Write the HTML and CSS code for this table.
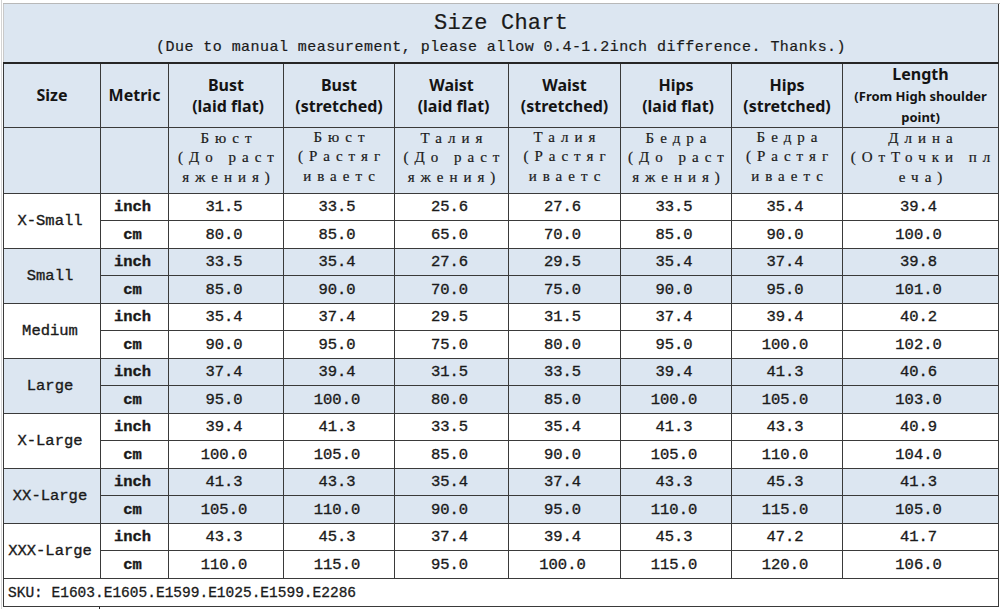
FILE: index.html
```html
<!DOCTYPE html>
<html lang="en">
<head>
<meta charset="utf-8">
<title>Size Chart</title>
<link rel="stylesheet" href="styles.css">
</head>
<body>
<div class="sheet">
  <div class="topstrip"></div>
  <table class="chart">
    <colgroup>
      <col class="c-size"><col class="c-metric"><col class="c-a"><col class="c-b"><col class="c-c"><col class="c-d"><col class="c-e"><col class="c-f"><col class="c-len">
    </colgroup>
    <tr class="title-row">
      <td colspan="9">
        <div class="title">Size Chart</div>
        <div class="subtitle">(Due to manual measurement, please allow 0.4-1.2inch difference.&nbsp;Thanks.)</div>
      </td>
    </tr>
    <tr class="head-row">
      <th>Size</th>
      <th>Metric</th>
      <th>Bust<br>&nbsp;(laid flat)</th>
      <th>Bust<br>(stretched)</th>
      <th>Waist<br>&nbsp;(laid flat)</th>
      <th>Waist<br>(stretched)</th>
      <th>Hips<br>&nbsp;(laid flat)</th>
      <th>Hips<br>(stretched)</th>
      <th><span class="len">Length</span><br><span class="len-sub">(From High shoulder<br>point)</span></th>
    </tr>
    <tr class="ru-row">
      <td></td>
      <td></td>
      <td><div class="ru"><div class="ru-in">Бюст<br>(До раст<br>яжения)</div></div></td>
      <td><div class="ru four"><div class="ru-in">Бюст<br>(Растяг<br>иваетс</div></div></td>
      <td><div class="ru"><div class="ru-in">Талия<br>(До раст<br>яжения)</div></div></td>
      <td><div class="ru four"><div class="ru-in">Талия<br>(Растяг<br>иваетс</div></div></td>
      <td><div class="ru"><div class="ru-in">Бедра<br>(До раст<br>яжения)</div></div></td>
      <td><div class="ru four"><div class="ru-in">Бедра<br>(Растяг<br>иваетс</div></div></td>
      <td><div class="ru"><div class="ru-in">Длина<br>(ОтТочки пл<br>еча)</div></div></td>
    </tr>

    <tr class="r-a"><td rowspan="2" class="size">X-Small</td><td class="metric">inch</td><td>31.5</td><td>33.5</td><td>25.6</td><td>27.6</td><td>33.5</td><td>35.4</td><td>39.4</td></tr>
    <tr class="r-b"><td class="metric">cm</td><td>80.0</td><td>85.0</td><td>65.0</td><td>70.0</td><td>85.0</td><td>90.0</td><td>100.0</td></tr>

    <tr class="r-a alt"><td rowspan="2" class="size">Small</td><td class="metric">inch</td><td>33.5</td><td>35.4</td><td>27.6</td><td>29.5</td><td>35.4</td><td>37.4</td><td>39.8</td></tr>
    <tr class="r-b alt"><td class="metric">cm</td><td>85.0</td><td>90.0</td><td>70.0</td><td>75.0</td><td>90.0</td><td>95.0</td><td>101.0</td></tr>

    <tr class="r-a"><td rowspan="2" class="size">Medium</td><td class="metric">inch</td><td>35.4</td><td>37.4</td><td>29.5</td><td>31.5</td><td>37.4</td><td>39.4</td><td>40.2</td></tr>
    <tr class="r-b"><td class="metric">cm</td><td>90.0</td><td>95.0</td><td>75.0</td><td>80.0</td><td>95.0</td><td>100.0</td><td>102.0</td></tr>

    <tr class="r-a alt"><td rowspan="2" class="size">Large</td><td class="metric">inch</td><td>37.4</td><td>39.4</td><td>31.5</td><td>33.5</td><td>39.4</td><td>41.3</td><td>40.6</td></tr>
    <tr class="r-b alt"><td class="metric">cm</td><td>95.0</td><td>100.0</td><td>80.0</td><td>85.0</td><td>100.0</td><td>105.0</td><td>103.0</td></tr>

    <tr class="r-a"><td rowspan="2" class="size">X-Large</td><td class="metric">inch</td><td>39.4</td><td>41.3</td><td>33.5</td><td>35.4</td><td>41.3</td><td>43.3</td><td>40.9</td></tr>
    <tr class="r-b"><td class="metric">cm</td><td>100.0</td><td>105.0</td><td>85.0</td><td>90.0</td><td>105.0</td><td>110.0</td><td>104.0</td></tr>

    <tr class="r-a alt"><td rowspan="2" class="size">XX-Large</td><td class="metric">inch</td><td>41.3</td><td>43.3</td><td>35.4</td><td>37.4</td><td>43.3</td><td>45.3</td><td>41.3</td></tr>
    <tr class="r-b alt"><td class="metric">cm</td><td>105.0</td><td>110.0</td><td>90.0</td><td>95.0</td><td>110.0</td><td>115.0</td><td>105.0</td></tr>

    <tr class="r-a"><td rowspan="2" class="size">XXX-Large</td><td class="metric">inch</td><td>43.3</td><td>45.3</td><td>37.4</td><td>39.4</td><td>45.3</td><td>47.2</td><td>41.7</td></tr>
    <tr class="r-b"><td class="metric">cm</td><td>110.0</td><td>115.0</td><td>95.0</td><td>100.0</td><td>115.0</td><td>120.0</td><td>106.0</td></tr>

    <tr class="sku-row"><td colspan="9" class="sku">SKU: E1603.E1605.E1599.E1025.E1599.E2286</td></tr>
  </table>
  <div class="bottomstrip"><span class="gl"></span></div>
</div>
</body>
</html>
```

FILE: styles.css
```css
* { box-sizing: border-box; }

html, body {
  margin: 0;
  padding: 0;
  background: #ffffff;
}

body {
  width: 1000px;
  height: 609px;
  overflow: hidden;
  font-family: "Liberation Mono", "DejaVu Sans Mono", monospace;
  color: #141414;
}

.sheet {
  margin-left: 1px;
  padding-left: 1px;
  border-left: 1px solid #d4d4d4;
}

.topstrip {
  height: 4px;
  border-bottom: 1px solid #b8b8b8;
  background: #ffffff;
}

.chart {
  border-collapse: collapse;
  table-layout: fixed;
  width: 995px;
}

.c-size   { width: 97px; }
.c-metric { width: 68px; }
.c-a      { width: 115px; }
.c-b      { width: 111px; }
.c-c      { width: 114px; }
.c-d      { width: 112px; }
.c-e      { width: 111px; }
.c-f      { width: 111px; }
.c-len    { width: 156px; }

.chart td,
.chart th {
  border: 1px solid #3a3a3a;
  padding: 0;
  text-align: center;
  vertical-align: middle;
  background: #ffffff;
}

/* title */
.title-row { height: 59px; }
.chart .title-row td {
  background: #dce6f1;
  border-top: none;
  border-left-color: #c9c9c9;
  border-bottom: 2px solid #262626;
  vertical-align: top;
  padding-top: 8px;
}
.title {
  font-family: "Liberation Mono", monospace;
  font-size: 22px;
  line-height: 24px;
  letter-spacing: 0.2px;
  color: #1a1a1a;
  -webkit-text-stroke: 0.2px #1a1a1a;
}
.subtitle {
  font-size: 15px;
  line-height: 20px;
  letter-spacing: 0.45px;
  margin-top: 2px;
  color: #1a1a1a;
  -webkit-text-stroke: 0.2px #1a1a1a;
}

/* header */
.head-row { height: 62px; }
.chart .head-row th {
  background: #dce6f1;
  font-family: "Noto Sans", "Open Sans", sans-serif;
  font-weight: 700;
  font-size: 16px;
  line-height: 21px;
  color: #141414;
}
.head-row .len { font-size: 16px; }
.head-row .len-sub {
  font-size: 13px;
  line-height: 19px;
}

/* russian row */
.ru-row { height: 66px; }
.chart .ru-row td {
  background: #dce6f1;
}
.ru {
  height: 64px;
  overflow: hidden;
  font-family: "Liberation Serif", serif;
  font-size: 15px;
  line-height: 19.5px;
  letter-spacing: 6px;
  padding-left: 6px;
  color: #1a1a1a;
  white-space: nowrap;
  -webkit-text-stroke: 0.2px #1a1a1a;
}
.ru-in { margin-top: 0; }
.ru.four .ru-in { margin-top: -1px; }

/* data */
.r-a { height: 27px; }
.r-b { height: 28px; }
.chart .alt td { background: #dce6f1; }

.chart tr.r-a td,
.chart tr.r-b td {
  font-size: 15.5px;
  color: #1a1a1a;
  -webkit-text-stroke: 0.35px #1a1a1a;
  padding-right: 4px;
}
.chart td.metric {
  font-size: 14px;
  font-weight: 700;
  -webkit-text-stroke: 0;
  padding-right: 0;
}
.chart td.size {
  font-size: 14px;
  font-weight: 400;
  -webkit-text-stroke: 0.5px #1a1a1a;
  padding-right: 0;
}

/* sku */
.sku-row { height: 28px; }
.chart td.sku {
  text-align: left;
  padding-left: 4px;
  font-size: 14.5px;
  color: #1a1a1a;
  -webkit-text-stroke: 0.3px #1a1a1a;
}

.bottomstrip {
  height: 3px;
  position: relative;
}
.gl {
  position: absolute;
  left: 96px;
  top: 0;
  bottom: 0;
  border-left: 1px solid #222;
}
```
